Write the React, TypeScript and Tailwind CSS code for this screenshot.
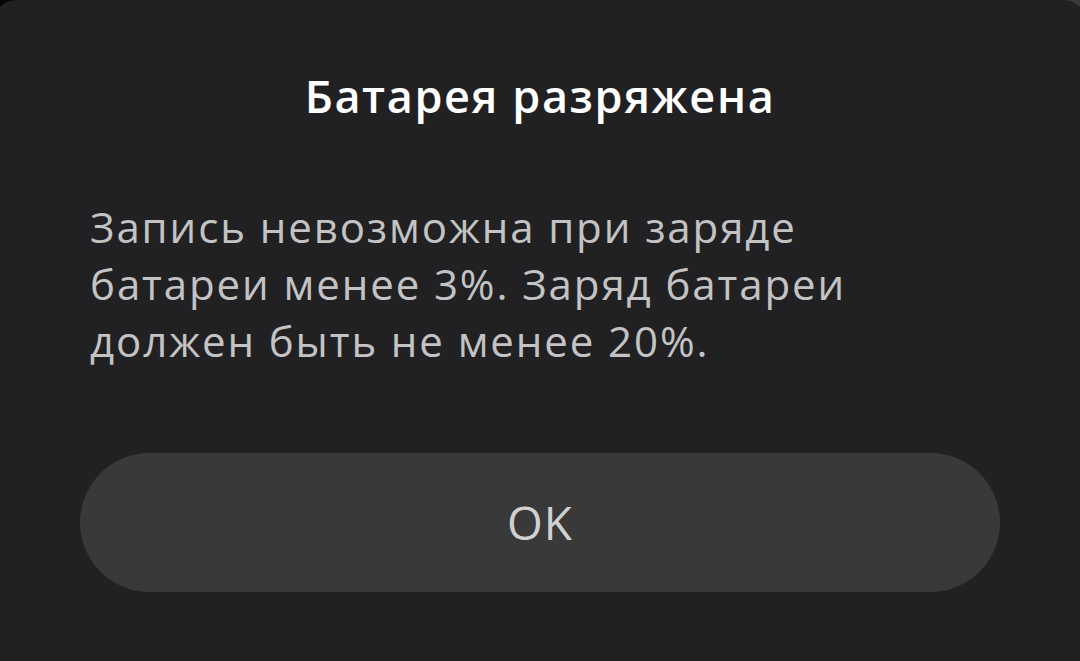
export default function App() {
  return (
    <div className="h-[661px] w-[1080px] overflow-hidden bg-[linear-gradient(to_right,#050505_50%,#3a3a36_50%)]">
      <div
        className="-mx-[6px] flex h-[661px] flex-col rounded-t-[22px] bg-[#212123] px-[96px]"
        style={{ fontFamily: "'Open Sans', Roboto, 'Noto Sans', sans-serif" }}
      >
        <h1 className="mt-[68px] text-center text-[45px] font-semibold leading-[56px] tracking-[1.6px] text-white">
          Батарея разряжена
        </h1>
        <p className="mt-[74px] text-[42px] leading-[57px] tracking-[1.9px] text-[#c3c3c3]">
          Запись невозможна при заряде
          <br />
          батареи менее 3%. Заряд батареи
          <br />
          должен быть не менее 20%.
        </p>
        <button className="-ml-[10px] mt-[84px] flex h-[139px] w-[920px] items-center justify-center rounded-full bg-[#393939] text-[46px] font-normal tracking-[1px] text-[#d0d0d0]">
          OK
        </button>
      </div>
    </div>
  );
}
